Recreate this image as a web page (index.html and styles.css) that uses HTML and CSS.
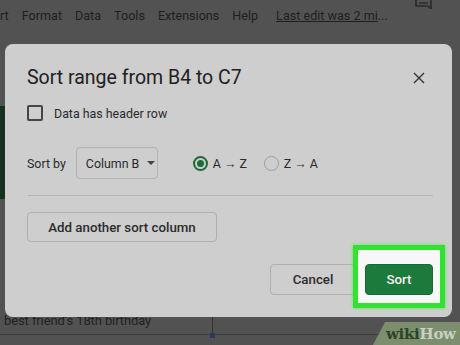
FILE: index.html
```html
<!DOCTYPE html>
<html>
<head>
<meta charset="utf-8">
<link rel="stylesheet" href="styles.css">
</head>
<body>
<div class="page">
  <div class="menubar">
    <span class="mi">rt</span>
    <span class="mi">Format</span>
    <span class="mi">Data</span>
    <span class="mi">Tools</span>
    <span class="mi">Extensions</span>
    <span class="mi">Help</span>
    <span class="mi last">Last edit was 2 mi</span><span class="dots">...</span>
    <svg class="comment" width="18" height="9" viewBox="0 0 18 9"><path d="M1 0 V6 H13 L16 9 V0" fill="none" stroke="#2a2a2a" stroke-width="1.6"/><path d="M4 3 H13" stroke="#2a2a2a" stroke-width="1.4"/></svg>
  </div>
  <div class="sheet">
    <div class="leftcol">
      <div class="lc-top"></div>
      <div class="lc-green"></div>
      <div class="lc-rest"></div>
    </div>
  </div>
  <div class="bottomrow">
    <span class="celltext">best friend's 18th birthday</span>
    <span class="cellsep"><span class="handle"></span></span>
  </div>

  <div class="dialog">
    <div class="titlerow">
      <h1 class="title">Sort range from B4 to C7</h1>
      <span class="close"><svg width="12" height="12" viewBox="0 0 12 12"><path d="M1 1 L11 11 M11 1 L1 11" stroke="#333" stroke-width="1.4"/></svg></span>
    </div>
    <div class="checkrow">
      <span class="checkbox"></span>
      <span class="checklabel">Data has header row</span>
    </div>
    <div class="sortrow">
      <span class="sortby">Sort by</span>
      <span class="select">Column B <span class="caret"></span></span>
      <span class="radio on"><span class="dot"></span></span>
      <span class="rlabel">A → Z</span>
      <span class="radio off"></span>
      <span class="rlabel">Z → A</span>
    </div>
    <div class="sep"></div>
    <button class="btn addbtn">Add another sort column</button>
    <div class="footer">
      <button class="btn cancel">Cancel</button>
      <span class="sortwrap"><button class="btn sortbtn">Sort</button></span>
    </div>
  </div>

  <div class="wikihow"><span class="wiki">wiki</span><span class="how">How</span></div>
</div>
</body>
</html>
```
FILE: styles.css
```css
* { box-sizing: border-box; }
html, body { margin: 0; padding: 0; }
body {
  width: 460px;
  height: 345px;
  overflow: hidden;
  background: #525252;
  font-family: Roboto, "Liberation Sans", sans-serif;
}
.page {
  position: relative;
  width: 460px;
  height: 345px;
  display: flex;
  flex-direction: column;
}
.menubar {
  position: relative;
  height: 33px;
  display: flex;
  align-items: center;
  gap: 13px;
  padding: 0 0 2px 0;
  font-size: 12.6px;
  color: #1e1e1e;
  white-space: nowrap;
}
.mi.last { margin-left: 5px; text-decoration: underline; }
.dots { margin-left: -13px; }
.comment { position: absolute; left: 415px; top: 0; }
.sheet {
  flex: 1;
  display: flex;
}
.leftcol {
  width: 6px;
  display: flex;
  flex-direction: column;
}
.lc-top { height: 73px; }
.lc-green { height: 93px; background: #17301f; }
.lc-rest { flex: 1; }
.bottomrow {
  height: 28px;
  display: flex;
  align-items: flex-start;
  border-bottom: 1px solid #3d3d3d;
  margin-bottom: 10px;
  position: relative;
}
.celltext {
  font-size: 13px;
  color: #222;
  padding: 6px 0 0 4px;
  width: 212px;
  letter-spacing: -0.1px;
  white-space: nowrap;
}
.cellsep {
  position: relative;
  width: 1px;
  height: 28px;
  background: #333;
}
.handle {
  position: absolute;
  left: -2px;
  bottom: -3px;
  width: 5px;
  height: 5px;
  background: #2b3a5c;
}

.dialog {
  position: absolute;
  left: 5px;
  top: 44px;
  width: 447px;
  height: 273px;
  background: #cecece;
  border-radius: 8px;
  padding: 20px 19px 0 22px;
  display: flex;
  flex-direction: column;
  align-items: stretch;
}
.titlerow {
  display: flex;
  justify-content: space-between;
  align-items: center;
  height: 28px;
}
.title {
  margin: 0;
  font-weight: 400;
  font-size: 19.5px;
  line-height: 28px;
  color: #202020;
  white-space: nowrap;
}
.close {
  width: 24px;
  height: 24px;
  display: flex;
  align-items: center;
  justify-content: center;
  margin-right: 2px;
}
.checkrow {
  margin-top: 10px;
  height: 22px;
  display: flex;
  align-items: center;
}
.checkbox {
  width: 16px;
  height: 16px;
  border: 2px solid #454545;
  border-radius: 2px;
}
.checklabel {
  margin-left: 11px;
  font-size: 12.4px;
  color: #2a2a2a;
  white-space: nowrap;
}
.sortrow {
  margin-top: 23px;
  height: 32px;
  display: flex;
  align-items: center;
  font-size: 12.4px;
  color: #2a2a2a;
  white-space: nowrap;
}
.select {
  margin-left: 10px;
  width: 82px;
  flex: none;
  height: 32px;
  border: 1px solid #b3b3b3;
  border-radius: 4px;
  display: flex;
  align-items: center;
  padding-left: 9px;
  color: #2a2a2a;
  white-space: nowrap;
}
.caret {
  margin-left: 8px;
  width: 0;
  height: 0;
  border-left: 4px solid transparent;
  border-right: 4px solid transparent;
  border-top: 4px solid #444;
}
.radio {
  width: 15px;
  height: 15px;
  flex: none;
  border-radius: 50%;
  display: flex;
  align-items: center;
  justify-content: center;
}
.radio.on { margin-left: 35px; border: 2px solid #1d6b3a; }
.radio.on .dot { width: 7px; height: 7px; border-radius: 50%; background: #1d6b3a; }
.radio.off { margin-left: 17px; border: 1.5px solid #9e9e9e; }
.rlabel { margin-left: 5px; }
.sep {
  margin-top: 16px;
  height: 1px;
  background: #b6b6b6;
  margin-left: 1px;
}
.btn {
  font-family: Roboto, "Liberation Sans", sans-serif;
  font-weight: 500;
  font-size: 13.3px;
  border-radius: 4px;
  padding: 0;
  cursor: pointer;
  white-space: nowrap;
}
.addbtn {
  margin-top: 16px;
  width: 190px;
  height: 30px;
  background: transparent;
  border: 1px solid #b0b0b0;
  color: #2c2c2c;
  align-self: flex-start;
}
.footer {
  margin-top: 22px;
  display: flex;
  justify-content: flex-end;
  gap: 9px;
}
.cancel {
  width: 86px;
  height: 31px;
  background: transparent;
  border: 1px solid #b0b0b0;
  color: #2c2c2c;
}
.sortwrap {
  position: relative;
  z-index: 1;
  display: flex;
}
.sortwrap::before {
  content: "";
  position: absolute;
  left: -12px;
  right: -12px;
  top: -19px;
  bottom: -13px;
  border: 5px solid #34e034;
  background: #f7f7f7;
  box-shadow: 0 0 3px #4cf04c;
  z-index: -1;
}
.sortbtn {
  width: 68px;
  height: 31px;
  background: #1b7a3c;
  border: 1px solid #176a33;
  color: #f2f2f2;
}

.wikihow {
  position: absolute;
  left: 373px;
  top: 322px;
  width: 87px;
  height: 23px;
  background: #7d8e6e;
  clip-path: polygon(12px 0, 100% 0, 100% 100%, 0 100%);
  display: flex;
  align-items: center;
  padding-left: 13px;
  font-family: "DejaVu Serif", "Liberation Serif", serif;
  font-weight: bold;
  font-size: 15px;
  letter-spacing: -0.3px;
}
.wiki { color: #2c4428; }
.how { color: #c9d1c1; }
```
